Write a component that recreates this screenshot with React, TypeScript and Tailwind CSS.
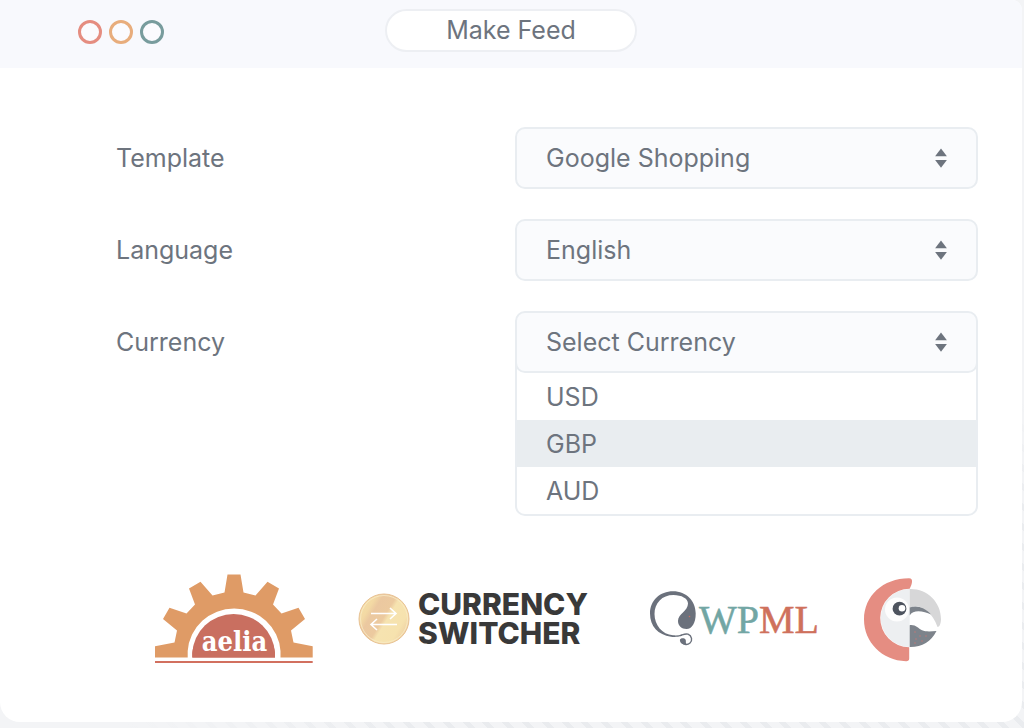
import { useState } from "react";
import type { ReactNode } from "react";

const FIELD =
  "h-[62px] w-full appearance-none rounded-[10px] border-2 border-[#e9edf1] bg-[#fafbfd] pl-[29px] pr-14 text-[25px] leading-8 text-[#6d747e] outline-none";

function SortArrows() {
  return (
    <svg
      className="pointer-events-none absolute right-[31px] top-[21px] h-5 w-3"
      viewBox="0 0 12 20"
      fill="#6d747e"
      aria-hidden="true"
    >
      <path d="M6 0.5 11.9 8.300H0.1Z" />
      <path d="M6 19.800 11.900 12H0.1Z" />
    </svg>
  );
}

function Row({ id, label, children }: { id: string; label: string; children: ReactNode }) {
  return (
    <div className="grid grid-cols-[399fr_463fr] items-start">
      <label htmlFor={id} className="flex h-[62px] items-center">
        {label}
      </label>
      <div>{children}</div>
    </div>
  );
}

function AeliaLogo() {
  return (
    <svg className="h-[90px] w-[158px] shrink-0" viewBox="155 574 158 90" role="img" aria-label="aelia">
      <path
        fill="#df9b66"
        d="M155 646.300 174.500 642.500 177 630.500 163 619 169.500 607.700 186.500 613.500 195 604.500 189 588.500 200.500 581.700 212.500 595.500 224.500 592.500 227.500 574.500H240.500L243.500 592.500 255.500 595.500 267.500 581.700 279 588.500 273 604.500 281.500 613.500 298.500 607.700 305 619 291 630.500 293.500 642.500 312.700 646.300V657.500H280.500V651A46.500 45.500 0 0 0 187.700 651V657.500H155Z"
      />
      <path fill="#c96f60" d="M192.300 657.500V653C193 638 208 626 234 626S274 638 275 653V657.500Z" />
      <path fill="#c96f60" d="M192.300 657.500V653A41.400 41 0 0 1 275 653V657.500Z" />
      <path fill="#d2705f" d="M155 661H312.700V663H155Z" />
      <text
        x="234.500"
        y="651"
        textAnchor="middle"
        fontSize="27"
        fontWeight="700"
        fill="#ffffff"
        fontFamily="'DejaVu Serif Condensed', 'DejaVu Serif', serif"
      >
        aelia
      </text>
    </svg>
  );
}

function CurrencySwitcherLogo() {
  return (
    <div className="flex w-[243px] shrink-0 items-center gap-2 pl-[2px]">
      <svg className="h-[52px] w-[52px] shrink-0" viewBox="0 0 52 52" aria-hidden="true">
        <defs>
          <linearGradient id="coin" x1="0" y1="0.200" x2="1" y2="0.800">
            <stop offset="0" stopColor="#f5e0a8" />
            <stop offset="0.180" stopColor="#f3d9a4" />
            <stop offset="0.280" stopColor="#ebc8a0" />
            <stop offset="0.480" stopColor="#ecca9f" />
            <stop offset="0.550" stopColor="#f6e3b0" />
            <stop offset="0.800" stopColor="#f6e2ae" />
            <stop offset="1" stopColor="#eccb9f" />
          </linearGradient>
        </defs>
        <circle cx="26" cy="26" r="25" fill="url(#coin)" stroke="#e8c193" strokeWidth="1" />
        <circle cx="26" cy="26" r="23.500" fill="none" stroke="#f9ebc6" strokeWidth="0.800" />
        <path
          d="M13 20.500H37M32 15l6 5.500-6 5.500M39 31.500H14M19 26l-6 5.500 6 5.500"
          fill="none"
          stroke="#ffffff"
          strokeWidth="1.600"
        />
      </svg>
      <div className="text-[30px] leading-[29px] font-extrabold text-[#393939]">
        CURRENCY
        <br />
        SWITCHER
      </div>
    </div>
  );
}

function WpmlLogo() {
  return (
    <svg className="h-[60px] w-[178px] shrink-0" viewBox="642 590 178 60" role="img" aria-label="WPML">
      <path
        fill="#6b717c"
        d="M682 636.800C678 638 674 638.200 671 637.700C658 636 650 627 650 614.500C650 601.500 660 592.300 673 592.300C686.500 592.300 695.700 602 695.700 614.500C695.700 624 692 630 686.500 630C681.500 630 678 626.500 678 622C678 615 688 612 688 604.500C688 599.500 681.500 596 673.500 596C662 596 654.500 604 654.500 615C654.500 626 662 635.500 673 636.300C676 636.600 679 636.400 682 635.500Z"
      />
      <path
        d="M680 636.700C683 635.800 685 634.300 688 635.200C692 636.800 692.700 641.500 690 644C687.500 646.200 684 645.800 682 643.500"
        fill="none"
        stroke="#6b717c"
        strokeWidth="1.400"
      />
      <path
        d="M680 640.500C681 638.800 684.500 638.700 685.500 640.500C686.500 642.500 685 644 687 645.500C683.500 646.500 679.300 644 680 640.500Z"
        fill="#6b717c"
      />
      <circle cx="689.500" cy="617.500" r="0.800" fill="#c96f60" />
      <text x="699" y="634" fontSize="40" fontFamily="'Liberation Serif', serif" fill="#72a6a4" stroke="#72a6a4" strokeWidth="0.500">
        WP
        <tspan fill="#cf715c" stroke="#cf715c">ML</tspan>
      </text>
    </svg>
  );
}

function ParrotLogo() {
  return (
    <svg className="h-[86px] w-[78px] shrink-0" viewBox="863 576 78 86" role="img" aria-label="Parrot">
      <path fill="#edeff1" d="M909.700 589A29 29 0 0 0 909.700 647Z" />
      <path
        fill="#e58d82"
        d="M909 578.300C911.500 578.300 912.300 580 912 582C911.700 585 910.500 586.500 909.700 588.800A29.200 29.200 0 0 0 909.200 647.300V658.500C909.200 660.500 908 661.300 906 661.200C882 660.500 864 642 864 619.500C864 596 883 578.300 909 578.300Z"
      />
      <circle cx="897" cy="609.500" r="12" fill="#fdfdfd" />
      <path
        fill="#d7d7d8"
        d="M909.700 589C927 588.500 941 602 941 619C941 622.500 940 627 937.500 627C935 620 931.500 614.500 927 611C921 606 914 605 909.700 608Z"
      />
      <path fill="#7d838b" d="M909.700 607.500C917 605 925 607.500 931 614.500C924 611 913 609 909.700 615.500Z" />
      <path
        fill="#7d838b"
        d="M909.700 625.200C916 624.500 918 628.500 922 630.300C926 632 931 631.500 936.500 631C931 642 922 647.200 909.700 647Z"
      />
      <circle cx="899.500" cy="608.700" r="6.900" fill="#4d535e" />
      <circle cx="902" cy="608.200" r="3.300" fill="#ffffff" />
      <g fill="#c97772">
        <circle cx="915" cy="632" r="0.700" />
        <circle cx="920" cy="636" r="0.700" />
        <circle cx="926" cy="636" r="0.700" />
        <circle cx="916" cy="639" r="0.700" />
        <circle cx="922" cy="641" r="0.700" />
        <circle cx="915" cy="643" r="0.700" />
      </g>
    </svg>
  );
}

const currencies = ["USD", "GBP", "AUD"];

export default function App() {
  const [currency, setCurrency] = useState("");
  const [active, setActive] = useState("GBP");

  return (
    <div className="min-h-screen bg-[#f3f4f6] bg-[linear-gradient(160deg,#f3f4f6_70%,transparent_80%),repeating-linear-gradient(45deg,#f3f4f6_0px,#f3f4f6_9px,#eaecef_9px,#eaecef_14px)] pr-[2px] pb-[6px] font-[Inter,sans-serif] text-[#6d747e]">
      <main className="flex min-h-[calc(100vh-6px)] flex-col overflow-hidden rounded-b-[20px] rounded-tr-[10px] bg-white">
        <header className="grid h-[68px] grid-cols-[1fr_252px_1fr] items-start bg-[#f8f9fd]">
          <div className="flex gap-[7px] pt-5 pl-[78px]">
            <span className="size-6 rounded-full border-[3px] border-[#e58d80] bg-white/40" />
            <span className="size-6 rounded-full border-[3px] border-[#e8ad7c] bg-white/40" />
            <span className="size-6 rounded-full border-[3px] border-[#789c9d] bg-white/40" />
          </div>
          <h1 className="mt-[9px] flex h-[43px] items-center justify-center rounded-full border-2 border-[#edeff3] bg-white text-[25px]">
            Make Feed
          </h1>
        </header>

        <form className="flex flex-col gap-[30px] pt-[59px] pr-11 pl-[116px] text-[25px] leading-8">
          <Row id="template" label="Template">
            <div className="relative">
              <select id="template" className={FIELD}>
                <option>Google Shopping</option>
              </select>
              <SortArrows />
            </div>
          </Row>
          <Row id="language" label="Language">
            <div className="relative">
              <select id="language" className={FIELD}>
                <option>English</option>
              </select>
              <SortArrows />
            </div>
          </Row>
          <Row id="currency" label="Currency">
            <div className="rounded-[10px] bg-white">
              <div className="relative z-10">
                <select
                  id="currency"
                  className={FIELD}
                  value={currency}
                  onChange={(e) => setCurrency(e.target.value)}
                >
                  <option value="">Select Currency</option>
                  {currencies.map((c) => (
                    <option key={c}>{c}</option>
                  ))}
                </select>
                <SortArrows />
              </div>
              <ul
                role="listbox"
                aria-label="Currency"
                className="-mt-3 rounded-b-[10px] border-2 border-t-0 border-[#e9edf1] pt-3"
              >
                {currencies.map((c) => (
                  <li
                    key={c}
                    role="option"
                    aria-selected={c === active}
                    onMouseEnter={() => setActive(c)}
                    onClick={() => setCurrency(c)}
                    className={
                      c === active
                        ? "flex h-[47px] cursor-pointer items-center bg-[#e9edf0] pl-[29px]"
                        : "flex h-[47px] cursor-pointer items-center pl-[29px]"
                    }
                  >
                    {c}
                  </li>
                ))}
              </ul>
            </div>
          </Row>
        </form>

        <footer className="flex items-center justify-between pt-[58px] pr-[81px] pb-14 pl-[155px]">
          <AeliaLogo />
          <CurrencySwitcherLogo />
          <WpmlLogo />
          <ParrotLogo />
        </footer>
      </main>
    </div>
  );
}
